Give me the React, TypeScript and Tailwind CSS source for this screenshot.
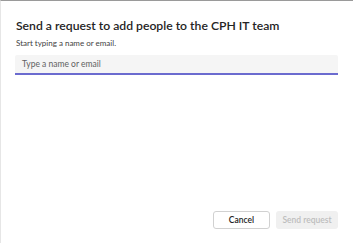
export default function App() {
  return (
    <div
      className="w-[353px] h-[243px] bg-white border-t border-t-[#9a9a9a] border-l border-l-[#e6e6e6] flex flex-col pl-[14px] pr-[15px] pt-[17px] pb-[14px]"
      style={{ fontFamily: 'Lato, "Open Sans", sans-serif' }}
    >
      <h1 className="text-[12.2px] font-semibold text-[#242424] leading-[16px] ml-[1px] whitespace-nowrap">
        Send a request to add people to the CPH IT team
      </h1>
      <p className="text-[8px] text-[#424242] leading-[12px] mt-[3px] ml-[1px]">
        Start typing a name or email.
      </p>
      <div className="mt-[6px] h-[20px] bg-[#f5f5f5] border-b-2 border-b-[#6b6bcf] rounded-t-[2px] flex items-center px-[7px]">
        <span className="text-[8.5px] text-[#616161]">Type a name or email</span>
      </div>
      <div className="flex-1" />
      <div className="flex justify-end gap-[6px]">
        <button className="w-[57px] h-[18px] border border-[#d1d1d1] rounded-[3px] bg-white text-[8.5px] font-semibold text-[#242424]">
          Cancel
        </button>
        <button className="w-[62px] h-[18px] rounded-[3px] bg-[#f0f0f0] text-[8.5px] font-semibold text-[#bdbdbd]">
          Send request
        </button>
      </div>
    </div>
  );
}
